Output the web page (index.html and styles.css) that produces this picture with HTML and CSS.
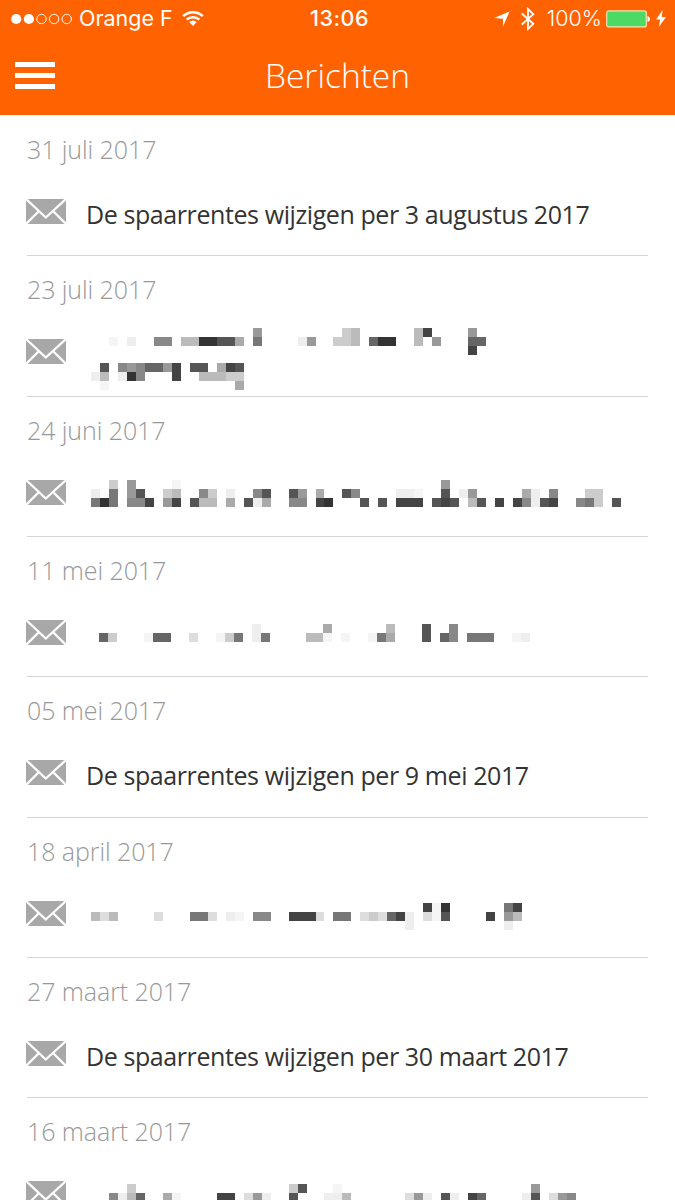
FILE: index.html
```html
<!DOCTYPE html>
<html lang="nl">
<head>
    <meta charset="UTF-8">
    <meta name="viewport" content="width=device-width, initial-scale=1.0">
    <title>Berichten</title>
    <link rel="stylesheet" href="styles.css">
</head>
<body>
    <svg class="symbols" width="0" height="0">
        <symbol id="mail" viewBox="0 0 40 25">
            <path d="M0 0H40V25H0Z" fill="#a8a8a8"/>
            <path d="M0 0L19.8 18.5L40 0M0 25L12.8 12.2M40 25L27.2 12.2" fill="none" stroke="#fff" stroke-width="2.3"/>
        </symbol>
    </svg>

    <header class="header">
        <div class="status-bar">
            <div class="status-left">
                <svg width="61" height="12" viewBox="0 0 61 12">
                    <g fill="#fff"><circle cx="5.2" cy="6" r="5.1"/><circle cx="17.9" cy="6" r="5.1"/></g>
                    <g fill="none" stroke="#fff" stroke-width="1"><circle cx="30.5" cy="6" r="4.7"/><circle cx="43.1" cy="6" r="4.7"/><circle cx="55.7" cy="6" r="4.7"/></g>
                </svg>
                <span class="carrier">Orange F</span>
                <svg class="wifi" width="22" height="17" viewBox="0 0 22 17">
                    <path d="M1.2 6.2A14 14 0 0 1 20.8 6.2M4.7 9.7A9 9 0 0 1 17.3 9.7" fill="none" stroke="#fff" stroke-width="2.5"/>
                    <path d="M7.3 12.1A5.3 5.3 0 0 1 14.7 12.1L11 15.9Z" fill="#fff"/>
                </svg>
            </div>
            <span class="time">13:06</span>
            <div class="status-right">
                <svg width="16" height="16" viewBox="0 0 16 16"><path d="M15.5 .5L9 15.8V7.8L0 7Z" fill="#fff"/></svg>
                <svg class="bluetooth" width="14" height="24" viewBox="0 0 14 24"><path d="M.8 6.5L12.3 16.8L7 22V2L12.3 7.2L.8 17.5" fill="none" stroke="#fff" stroke-width="1.8"/></svg>
                <span class="percent">100%</span>
                <svg class="battery" width="44" height="18" viewBox="0 0 44 18">
                    <rect x=".7" y=".9" width="39.6" height="16" rx="2" fill="#4cd964" stroke="#ffe0b0" stroke-width="1.2"/>
                    <path d="M41.5 6Q44 6.4 44 9T41.5 12Z" fill="#fff"/>
                </svg>
                <svg width="10" height="17" viewBox="0 0 10 17"><path d="M6.6 0L0 9.6H4.1L2.8 17L10 7.1H5.8Z" fill="#fff"/></svg>
            </div>
        </div>
        <div class="nav-bar">
            <div class="menu-button"><span></span><span></span><span></span></div>
            <h1>Berichten</h1>
        </div>
    </header>

    <main class="messages">
        <article class="message">
            <time>31 juli 2017</time>
            <div class="message-row">
                <svg class="mail-icon"><use href="#mail"/></svg>
                <p>De spaarrentes wijzigen per 3 augustus 2017</p>
            </div>
        </article>
        <article class="message">
            <time>23 juli 2017</time>
            <div class="message-row">
                <svg class="mail-icon"><use href="#mail"/></svg>
                <div class="mosaic lines-2" data-rows="18:9 28:cb 36:b4 42:9|2:f 4:e 7:88 10:bb3355a 18:7 23:e9 27:ccb 31:633 36:b 38:9 42:66|42:4||1:5 3:898669 9:4 11:55 14:a45|0:eb 3:e38 9:4 12:bbbcc|1:f 16:a"></div>
            </div>
        </article>
        <article class="message">
            <time>24 juni 2017</time>
            <div class="message-row">
                <svg class="mail-icon"><use href="#mail"/></svg>
                <div class="mosaic tall" data-rows="2:c 4:9 9:f 39:9|0:e 2:7 4:95 8:cb 12:8c 15:e 18:85 22:59 25:a 28:58 34:eef 39:5 41:e9 48:ae 51:8 55:cc|0:737 4:884 8:94 11:5bb 15:a 17:5ea 22:88 25:43 30:5 32:5 34:444 38:545 42:b5 45:4 47:48e54 54:87c 58:5"></div>
            </div>
        </article>
        <article class="message">
            <time>11 mei 2017</time>
            <div class="message-row">
                <svg class="mail-icon"><use href="#mail"/></svg>
                <div class="mosaic" data-rows="18:e 26:a 33:b 37:5 40:8|1:6c 6:f66 11:d 14:fc7 18:e7 24:bbf 28:f 31:f7a 37:5 39:68 42:777 47:fe"></div>
            </div>
        </article>
        <article class="message">
            <time>05 mei 2017</time>
            <div class="message-row">
                <svg class="mail-icon"><use href="#mail"/></svg>
                <p>De spaarrentes wijzigen per 9 mei 2017</p>
            </div>
        </article>
        <article class="message">
            <time>18 april 2017</time>
            <div class="message-row">
                <svg class="mail-icon"><use href="#mail"/></svg>
                <div class="mosaic raised" data-rows="37:4f3 46:74|0:bdb 7:d 11:77d 15:ef 18:88 22:444d 27:77 30:dcd64e 37:df5 44:4 46:9b|35:e 46:e"></div>
            </div>
        </article>
        <article class="message">
            <time>27 maart 2017</time>
            <div class="message-row">
                <svg class="mail-icon"><use href="#mail"/></svg>
                <p>De spaarrentes wijzigen per 30 maart 2017</p>
            </div>
        </article>
        <article class="message">
            <time>16 maart 2017</time>
            <div class="message-row">
                <svg class="mail-icon"><use href="#mail"/></svg>
                <div class="mosaic raised" data-rows="4:c 22:c5 27:f 49:9|2:8eb6 8:af 14:44 17:d9e 22:5 26:eeb 35:d9e 39:5e 42:46 48:e5 51:d98"></div>
            </div>
        </article>
    </main>

    <script src="mosaic.js"></script>
</body>
</html>
```

FILE: styles.css
```css
* {
    box-sizing: border-box;
}

body {
    margin: 0;
    height: 1200px;
    overflow: hidden;
    background: #fff;
    color: #333;
    font-family: "Open Sans", "Noto Sans", sans-serif;
}

svg {
    display: block;
    flex: none;
}

.symbols {
    display: none;
}

.header {
    height: 115px;
    background: #ff6200;
    color: #fff;
}

.status-bar {
    display: grid;
    grid-template-columns: 1fr auto 1fr;
    align-items: center;
    height: 37px;
    padding: 0 9px 0 11px;
    font: 21.5px/37px Inter, sans-serif;
}

.status-left,
.status-right {
    display: flex;
    align-items: center;
}

.status-right {
    justify-content: flex-end;
}

.carrier {
    margin: 0 9px 0 7px;
    font-weight: 400;
}

.time {
    padding-left: 2px;
    font-weight: 550;
    letter-spacing: 0.5px;
}

.bluetooth {
    margin: 0 12px 0 11px;
}

.percent {
    font-weight: 300;
}

.battery {
    margin: 0 6px 0 4px;
}

.nav-bar {
    display: grid;
    grid-template-columns: 40px 1fr 40px;
    align-items: center;
    height: 78px;
    padding: 0 15px;
}

.menu-button {
    display: grid;
    gap: 6px;
    margin-top: -2px;
}

.menu-button span {
    height: 5px;
    background: #fff;
}

.nav-bar h1 {
    margin: 0;
    font-size: 33.5px;
    font-weight: 340;
    line-height: 76px;
    padding-bottom: 2px;
    text-align: center;
}

.messages {
    padding: 1px 27px 0;
}

.message {
    height: 140.35px;
    padding-top: 16px;
    border-bottom: 1px solid #d4d4d4;
}

.message time {
    display: block;
    height: 34px;
    color: #989898;
    font-size: 25px;
    font-weight: 330;
    line-height: 34px;
    letter-spacing: -0.08px;
}

.message-row {
    display: flex;
    align-items: flex-start;
    margin-left: -1px;
    padding-top: 33px;
}

.mail-icon {
    width: 40px;
    height: 25px;
}

.message-row p {
    margin: -2px 0 0 20px;
    font-size: 25px;
    font-weight: 370;
    line-height: 34px;
    letter-spacing: -0.41px;
    white-space: nowrap;
}

/* Onleesbaar gemaakte onderwerpen */
.mosaic {
    margin: 4px 0 0 24px;
}

.mosaic.tall {
    margin: 0 0 0 25px;
}

.mosaic.raised {
    margin: 2.5px 0 0 24.5px;
}

.mosaic.lines-2 {
    margin: -11px 0 0 24.5px;
}
```

FILE: mosaic.js
```js
// data-rows: rijen gescheiden door |, elke reeks is "kolom:grijswaarden" (hex)
const cellWidth = 8.98;
const cellHeight = 8.85;
const ns = 'http://www.w3.org/2000/svg';

document.querySelectorAll('.mosaic').forEach(mosaic => {
    const rows = mosaic.dataset.rows.split('|');
    const svg = document.createElementNS(ns, 'svg');
    svg.setAttribute('width', 540);
    svg.setAttribute('height', Math.ceil(rows.length * cellHeight));

    rows.forEach((row, y) => {
        row.split(' ').filter(Boolean).forEach(run => {
            const [start, shades] = run.split(':');
            [...shades].forEach((shade, i) => {
                const left = Math.round((Number(start) + i) * cellWidth);
                const right = Math.round((Number(start) + i + 1) * cellWidth);
                const top = Math.round(y * cellHeight);
                const bottom = Math.round((y + 1) * cellHeight);
                const rect = document.createElementNS(ns, 'rect');
                rect.setAttribute('x', left);
                rect.setAttribute('y', top);
                rect.setAttribute('width', right - left);
                rect.setAttribute('height', bottom - top);
                rect.setAttribute('fill', shade === 'f' ? '#f5f5f5' : '#' + shade.repeat(3));
                svg.appendChild(rect);
            });
        });
    });
    mosaic.appendChild(svg);
});
```
